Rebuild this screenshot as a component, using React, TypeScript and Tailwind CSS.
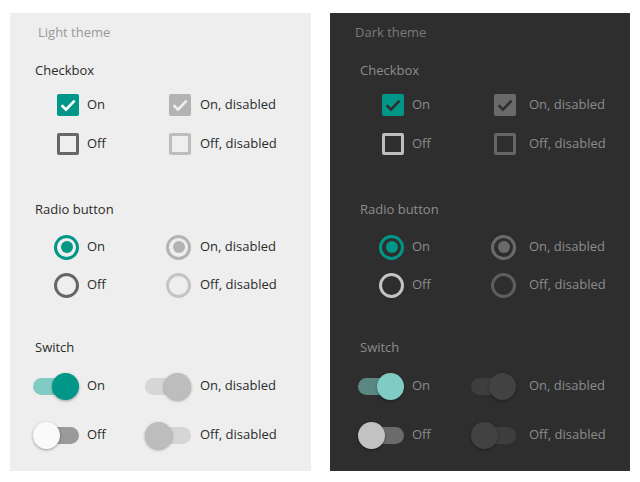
type Theme = 'light' | 'dark';

function CheckBox({ theme, on, disabled }: { theme: Theme; on: boolean; disabled: boolean }) {
  const dark = theme === 'dark';
  if (on) {
    const fill = disabled ? (dark ? 'bg-[#6a6a6a]' : 'bg-[#b3b3b3]') : 'bg-[#009688]';
    const tick = dark ? '#2f2f2f' : disabled ? '#eeeeee' : '#ffffff';
    return (
      <div className={`w-[22px] h-[22px] rounded-[2px] flex items-center justify-center ${fill}`}>
        <svg width="18" height="18" viewBox="0 0 18 18">
          <path d="M2.6 9.2 L7 13.6 L15.6 4.6" fill="none" stroke={tick} strokeWidth="2.7" />
        </svg>
      </div>
    );
  }
  const border = disabled
    ? dark
      ? 'border-[#666666]'
      : 'border-[#bdbdbd]'
    : dark
      ? 'border-[#bdbdbd]'
      : 'border-[#666666]';
  return <div className={`w-[22px] h-[22px] rounded-[2px] border-[3px] ${border}`} />;
}

function Radio({ theme, on, disabled }: { theme: Theme; on: boolean; disabled: boolean }) {
  const dark = theme === 'dark';
  let ring = '';
  let dot = '';
  if (on) {
    ring = disabled ? (dark ? 'border-[#6a6a6a]' : 'border-[#b3b3b3]') : 'border-[#009688]';
    dot = disabled ? (dark ? 'bg-[#6a6a6a]' : 'bg-[#b3b3b3]') : 'bg-[#009688]';
  } else {
    ring = disabled
      ? dark
        ? 'border-[#5e5e5e]'
        : 'border-[#c4c4c4]'
      : dark
        ? 'border-[#c4c4c4]'
        : 'border-[#666666]';
  }
  return (
    <div className={`w-[25px] h-[25px] rounded-full border-[3px] flex items-center justify-center ${ring}`}>
      {on ? <div className={`w-[12px] h-[12px] rounded-full ${dot}`} /> : null}
    </div>
  );
}

function Switch({ theme, on, disabled }: { theme: Theme; on: boolean; disabled: boolean }) {
  const dark = theme === 'dark';
  let track = '';
  let thumb = '';
  if (dark) {
    if (disabled) {
      track = 'bg-[#3e3e3e]';
      thumb = 'bg-[#424242]';
    } else if (on) {
      track = 'bg-[#5b8783]';
      thumb = 'bg-[#80cbc4]';
    } else {
      track = 'bg-[#6b6b6b]';
      thumb = 'bg-[#c2c2c2]';
    }
  } else {
    if (disabled) {
      track = 'bg-[#d6d6d6]';
      thumb = 'bg-[#bdbdbd]';
    } else if (on) {
      track = 'bg-[#80cbc4]';
      thumb = 'bg-[#009688]';
    } else {
      track = 'bg-[#9a9a9a]';
      thumb = 'bg-[#fafafa]';
    }
  }
  return (
    <div className={`relative w-[46px] h-[17px] rounded-full ${track}`}>
      <div
        className={`absolute top-[-5px] w-[27px] h-[27px] rounded-full shadow-[0_1px_3px_rgba(0,0,0,0.35)] ${thumb} ${
          on ? 'right-0' : 'left-0'
        }`}
      />
    </div>
  );
}

type Kind = 'check' | 'radio' | 'switch';

function Control({ kind, theme, on, disabled }: { kind: Kind; theme: Theme; on: boolean; disabled: boolean }) {
  if (kind === 'check') return <CheckBox theme={theme} on={on} disabled={disabled} />;
  if (kind === 'radio') return <Radio theme={theme} on={on} disabled={disabled} />;
  return <Switch theme={theme} on={on} disabled={disabled} />;
}

function Row({ kind, theme, on, height }: { kind: Kind; theme: Theme; on: boolean; height: string }) {
  const dark = theme === 'dark';
  const label = dark ? 'text-[#8c8c8c]' : 'text-[#2b2b2b]';
  return (
    <div className={`flex items-center ${height} ${dark ? 'pl-[26px]' : 'pl-[21px]'}`}>
      <div className={`flex items-center ${dark ? 'w-[115px]' : 'w-[113px]'}`}>
        <div className="w-[48px] flex justify-end">
          <Control kind={kind} theme={theme} on={on} disabled={false} />
        </div>
        <span className={`ml-2 ${label}`}>{on ? 'On' : 'Off'}</span>
      </div>
      <div className="flex items-center">
        <div className={`flex justify-end ${dark ? 'w-[45px]' : 'w-[47px]'}`}>
          <Control kind={kind} theme={theme} on={on} disabled={true} />
        </div>
        <span className={`${dark ? 'ml-[13px]' : 'ml-[9px]'} ${label}`}>{on ? 'On, disabled' : 'Off, disabled'}</span>
      </div>
    </div>
  );
}

function Panel({ theme }: { theme: Theme }) {
  const dark = theme === 'dark';
  const head = `h-5 leading-5 ${dark ? 'pl-[30px] text-[#8c8c8c]' : 'pl-[25px] text-[#2b2b2b]'}`;
  return (
    <div className={`h-[458px] pt-[9px] ${dark ? 'w-[300px] bg-[#2e2e2e]' : 'w-[301px] bg-[#eeeeee]'}`}>
      <div className={`h-5 leading-5 ${dark ? 'pl-[25px] text-[#7a7a7a]' : 'pl-[28px] text-[#999999]'}`}>
        {dark ? 'Dark theme' : 'Light theme'}
      </div>
      <div className={`mt-[18px] ${head}`}>Checkbox</div>
      <div className="mt-[5px]">
        <Row kind="check" theme={theme} on={true} height="h-[39px]" />
        <Row kind="check" theme={theme} on={false} height="h-[39px]" />
      </div>
      <div className={`mt-[36px] ${head}`}>Radio button</div>
      <div className="mt-[9px]">
        <Row kind="radio" theme={theme} on={true} height="h-[38px]" />
        <Row kind="radio" theme={theme} on={false} height="h-[38px]" />
      </div>
      <div className={`mt-[33px] ${head}`}>Switch</div>
      <div className="mt-[9px] flex flex-col gap-[9px]">
        <Row kind="switch" theme={theme} on={true} height="h-[40px]" />
        <Row kind="switch" theme={theme} on={false} height="h-[40px]" />
      </div>
    </div>
  );
}

export default function App() {
  return (
    <div
      className="w-[640px] h-[482px] bg-white flex gap-[19px] pl-[10px] pt-[13px] text-[13px]"
      style={{ fontFamily: '"Open Sans", "Noto Sans", sans-serif' }}
    >
      <Panel theme="light" />
      <Panel theme="dark" />
    </div>
  );
}
